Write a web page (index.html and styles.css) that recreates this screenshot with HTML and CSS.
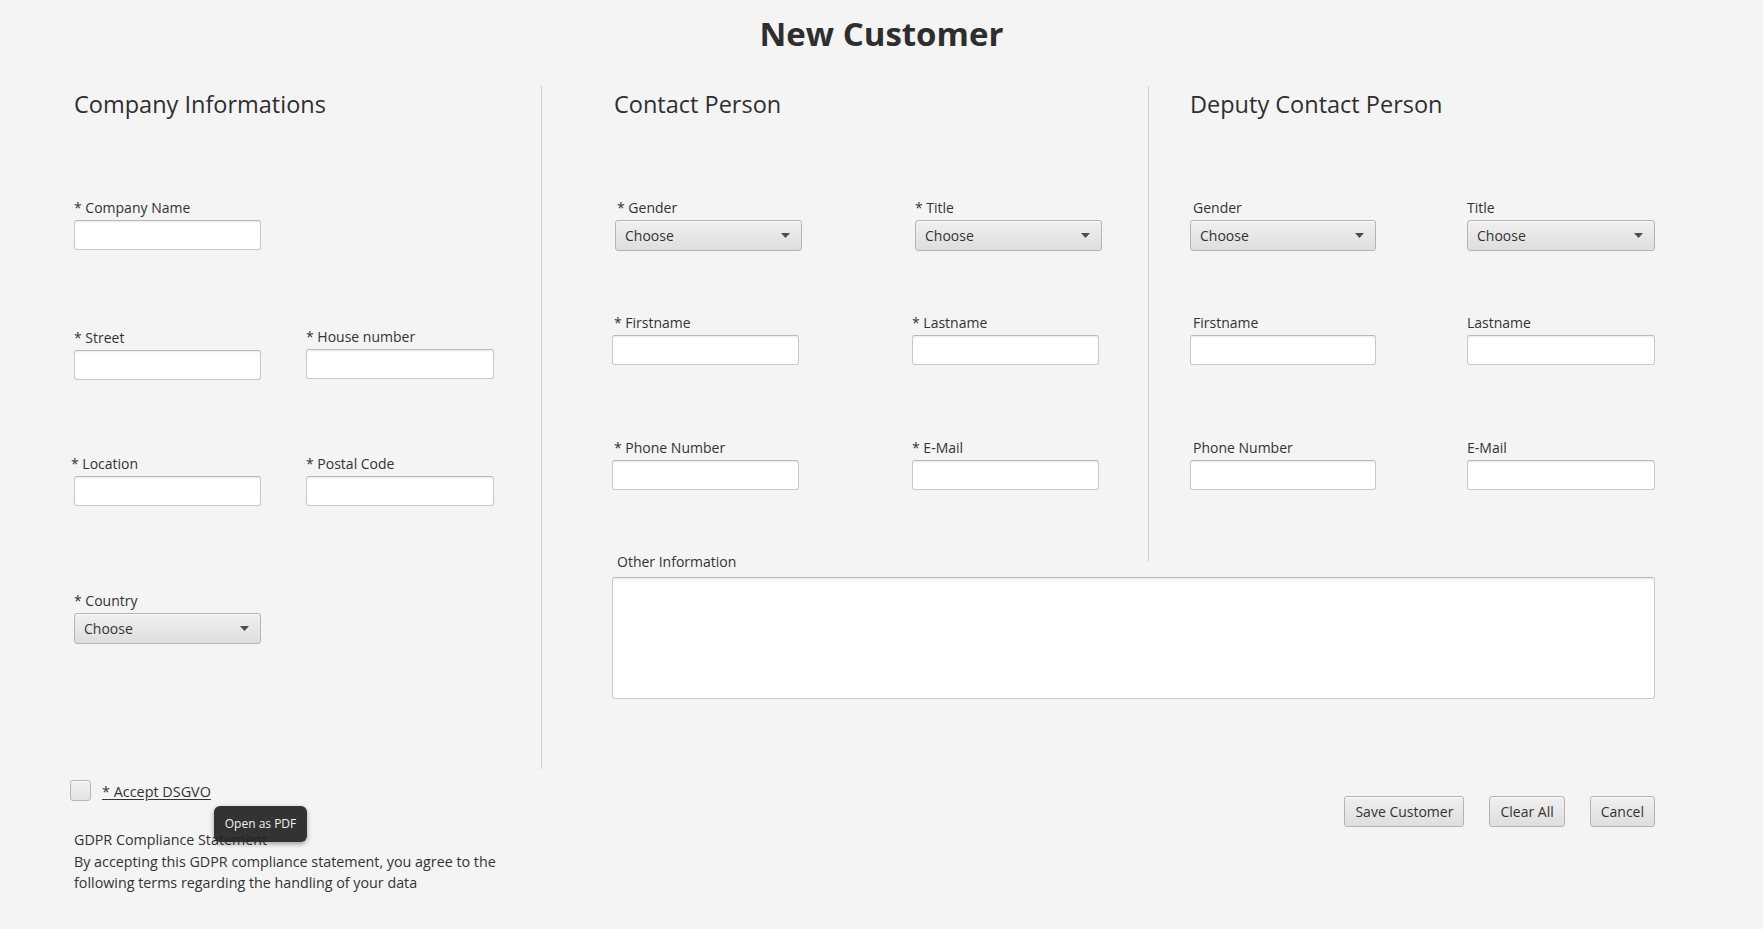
FILE: index.html
```html
<!DOCTYPE html>
<html lang="en">
<head>
<meta charset="utf-8">
<title>New Customer</title>
<link rel="stylesheet" href="styles.css">
</head>
<body>
<div class="page">
  <h1 class="title">New Customer</h1>
  <div class="main">
    <div class="left">
      <section class="col col1">
        <h2 class="heading">Company Informations</h2>
        <div class="row row-a grid1">
          <div class="field"><label class="lbl">* Company Name</label><input class="tf" type="text"></div>
        </div>
        <div class="row row-b grid1">
          <div class="field"><label class="lbl">* Street</label><input class="tf" type="text"></div>
          <div class="field up1"><label class="lbl">* House number</label><input class="tf" type="text"></div>
        </div>
        <div class="row row-c grid1">
          <div class="field"><label class="lbl shift">* Location</label><input class="tf" type="text"></div>
          <div class="field"><label class="lbl">* Postal Code</label><input class="tf" type="text"></div>
        </div>
        <div class="row row-d grid1">
          <div class="field"><label class="lbl">* Country</label>
            <div class="combo"><span>Choose</span><svg class="arrow" width="9" height="5" viewBox="0 0 9 5"><polygon points="0,0 9,0 4.5,5" fill="#4d4d4d"/></svg></div>
          </div>
        </div>
      </section>
      <div class="consent">
        <span class="checkbox"></span>
        <a class="accept">* Accept DSGVO</a>
        <div class="tooltip">Open as PDF</div>
      </div>
      <p class="gdpr">GDPR Compliance Statement<br>By accepting this GDPR compliance statement, you agree to the<br>following terms regarding the handling of your data</p>
    </div>
    <div class="right">
      <div class="top">
        <section class="col col2">
          <h2 class="heading">Contact Person</h2>
          <div class="row row-a grid2">
            <div class="field nudge-r"><label class="lbl in2">* Gender</label>
              <div class="combo"><span>Choose</span><svg class="arrow" width="9" height="5" viewBox="0 0 9 5"><polygon points="0,0 9,0 4.5,5" fill="#4d4d4d"/></svg></div>
            </div>
            <div class="field nudge-r"><label class="lbl">* Title</label>
              <div class="combo"><span>Choose</span><svg class="arrow" width="9" height="5" viewBox="0 0 9 5"><polygon points="0,0 9,0 4.5,5" fill="#4d4d4d"/></svg></div>
            </div>
          </div>
          <div class="row row-e grid2">
            <div class="field nudge-l"><label class="lbl in2">* Firstname</label><input class="tf" type="text"></div>
            <div class="field nudge-l"><label class="lbl">* Lastname</label><input class="tf" type="text"></div>
          </div>
          <div class="row row-f grid2">
            <div class="field nudge-l"><label class="lbl in2">* Phone Number</label><input class="tf" type="text"></div>
            <div class="field nudge-l"><label class="lbl">* E-Mail</label><input class="tf" type="text"></div>
          </div>
        </section>
        <section class="col col3">
          <h2 class="heading">Deputy Contact Person</h2>
          <div class="row row-a grid3">
            <div class="field"><label class="lbl in3">Gender</label>
              <div class="combo"><span>Choose</span><svg class="arrow" width="9" height="5" viewBox="0 0 9 5"><polygon points="0,0 9,0 4.5,5" fill="#4d4d4d"/></svg></div>
            </div>
            <div class="field"><label class="lbl">Title</label>
              <div class="combo"><span>Choose</span><svg class="arrow" width="9" height="5" viewBox="0 0 9 5"><polygon points="0,0 9,0 4.5,5" fill="#4d4d4d"/></svg></div>
            </div>
          </div>
          <div class="row row-e grid3">
            <div class="field"><label class="lbl in3">Firstname</label><input class="tf" type="text"></div>
            <div class="field"><label class="lbl">Lastname</label><input class="tf" type="text"></div>
          </div>
          <div class="row row-f grid3">
            <div class="field"><label class="lbl in3">Phone Number</label><input class="tf" type="text"></div>
            <div class="field"><label class="lbl">E-Mail</label><input class="tf" type="text"></div>
          </div>
        </section>
      </div>
      <div class="other">
        <label class="lbl in5">Other Information</label>
        <textarea class="ta"></textarea>
      </div>
      <div class="actions">
        <button class="btn">Save Customer</button>
        <button class="btn">Clear All</button>
        <button class="btn">Cancel</button>
      </div>
    </div>
  </div>
</div>
</body>
</html>
```
FILE: styles.css
```css
* { box-sizing: border-box; }
html, body { margin: 0; padding: 0; }
body {
  background: #f4f4f4;
  color: #333333;
  font-family: "Open Sans", "Noto Sans", "Liberation Sans", sans-serif;
  font-size: 14px;
}
.page {
  width: 1763px;
  height: 929px;
  overflow: hidden;
}
.title {
  margin: 0;
  padding-top: 11px;
  height: 57px;
  font-size: 33px;
  line-height: 46px;
  font-weight: 700;
  text-align: center;
  color: #2e2e2e;
}
.main {
  display: flex;
  margin-top: 29px;
  padding-left: 74px;
}
.left {
  width: 468px;
  flex: none;
  position: relative;
}
.col { display: flex; flex-direction: column; }
.col1 {
  height: 683px;
  border-right: 1px solid #cfcfcf;
}
.heading {
  margin: 0;
  padding-top: 1px;
  height: 34px;
  font-size: 23.5px;
  line-height: 34px;
  font-weight: 400;
  color: #2f2f2f;
}
.grid1 { display: grid; grid-template-columns: 187px 188px; column-gap: 45px; }
.grid2 { display: grid; grid-template-columns: 187px 187px; column-gap: 113px; }
.grid3 { display: grid; grid-template-columns: 186px 188px; column-gap: 91px; }
.row-a { margin-top: 77px; }
.row-b { margin-top: 77px; }
.row-c { margin-top: 73px; }
.row-d { margin-top: 84px; }
.row-e { margin-top: 61px; }
.row-f { margin-top: 72px; }
.field { display: flex; flex-direction: column; }
.nudge-r { margin-left: 1px; margin-right: -1px; }
.nudge-l { margin-left: -2px; margin-right: 2px; }
.up1 { margin-top: -1px; }
.lbl {
  display: block;
  padding-top: 1px;
  line-height: 20px;
  height: 21px;
  margin-bottom: 2px;
  white-space: nowrap;
  color: #333333;
}
.shift { margin-left: -3px; }
.in2 { padding-left: 2px; }
.in3 { padding-left: 3px; }
.in5 { padding-left: 5px; }
.tf {
  display: block;
  width: 100%;
  height: 30px;
  margin: 0;
  padding: 0 8px;
  background: #ffffff;
  border: 1px solid #c8c8c8;
  border-top-color: #b9b9b9;
  border-radius: 3px;
  box-shadow: inset 0 2px 2px -1px rgba(0, 0, 0, 0.09);
  font: inherit;
  outline: none;
}
.combo {
  display: flex;
  align-items: center;
  justify-content: space-between;
  height: 31px;
  padding: 0 11px 0 9px;
  border: 1px solid #b4b4b4;
  border-radius: 3px;
  background: linear-gradient(#f0f0f0, #dedede);
  box-shadow: inset 0 1px 0 rgba(255, 255, 255, 0.7);
  color: #333333;
}
.arrow { display: block; }
.consent {
  display: flex;
  align-items: center;
  margin-top: 11px;
  margin-left: -4px;
  height: 21px;
}
.checkbox {
  display: block;
  width: 21px;
  height: 21px;
  border: 1px solid #b7b7b7;
  border-radius: 3px;
  background: linear-gradient(#f1f1f1, #e2e2e2);
  box-shadow: inset 0 1px 0 rgba(255, 255, 255, 0.7);
}
.accept {
  margin-left: 11px;
  padding-top: 2px;
  font-size: 14.4px;
  text-decoration: underline;
  text-underline-offset: 2px;
  color: #333333;
  line-height: 20px;
}
.tooltip {
  position: absolute;
  left: 140px;
  top: 720px;
  width: 93px;
  height: 36px;
  line-height: 36px;
  text-align: center;
  background: rgba(36, 36, 36, 0.93);
  color: #f0f0f0;
  font-size: 12px;
  border-radius: 6px;
  box-shadow: 0 2px 5px rgba(0, 0, 0, 0.35);
}
.gdpr {
  margin: 28px 0 0 0;
  font-size: 14.3px;
  line-height: 21.5px;
  color: #333333;
}
.right {
  flex: 1;
  display: flex;
  flex-direction: column;
  padding-right: 112px;
}
.top { display: flex; }
.col2 {
  width: 607px;
  height: 475px;
  padding-left: 72px;
  border-right: 1px solid #cfcfcf;
  flex: none;
}
.col3 {
  flex: 1;
  padding-left: 41px;
}
.other {
  margin-top: -10px;
  padding-left: 70px;
  display: flex;
  flex-direction: column;
}
.other .lbl { margin-bottom: 5px; }
.ta {
  display: block;
  width: 100%;
  height: 122px;
  margin: 0;
  resize: none;
  background: #ffffff;
  border: 1px solid #c8c8c8;
  border-top-color: #b9b9b9;
  border-radius: 3px;
  box-shadow: inset 0 3px 3px -2px rgba(0, 0, 0, 0.1);
  font: inherit;
  outline: none;
}
.actions {
  display: flex;
  justify-content: flex-end;
  gap: 25px;
  margin-top: 97px;
}
.btn {
  height: 31px;
  padding: 0 10px;
  margin: 0;
  font: inherit;
  color: #333333;
  border: 1px solid #b4b4b4;
  border-radius: 3px;
  background: linear-gradient(#f0f0f0, #dedede);
  box-shadow: inset 0 1px 0 rgba(255, 255, 255, 0.7);
}
```
